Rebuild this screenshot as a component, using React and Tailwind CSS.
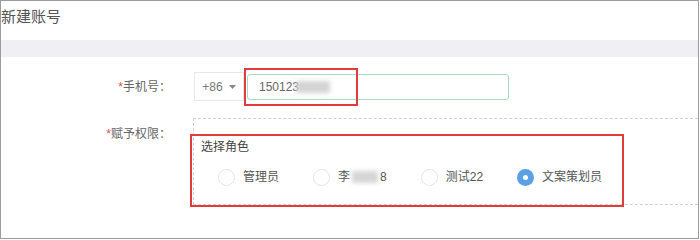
import React from 'react';

function Radio({ label, checked, blurred }) {
  return (
    <div className="flex items-center gap-[8px]">
      {checked ? (
        <span className="w-[17px] h-[17px] rounded-full bg-[#5b9fe4] flex items-center justify-center">
          <span className="w-[5px] h-[5px] rounded-full bg-white" />
        </span>
      ) : (
        <span className="w-[17px] h-[17px] rounded-full border border-[#e4e4e4] bg-white" />
      )}
      {blurred ? (
        <span className="flex items-center text-[12px] text-[#555]">
          李
          <span className="inline-block w-[26px] h-[12px] bg-[#d6d6d6] blur-[2px] mx-[2px]" />
          8
        </span>
      ) : (
        <span className="text-[12px] text-[#555]">{label}</span>
      )}
    </div>
  );
}

export default function App() {
  return (
    <div className="w-[699px] h-[239px] border border-[#9c9c9c] bg-white overflow-hidden font-['Liberation_Sans','Noto_Sans_CJK_SC',sans-serif]">
      {/* 标题 */}
      <div className="h-[39px] pt-[6px] text-[15px] leading-[20px] text-[#555]">新建账号</div>
      <div className="h-[17px] bg-[#f0f0f4]" />

      {/* 手机号 */}
      <div className="flex items-center mt-[15px] h-[29px]">
        <div className="w-[170px] text-right text-[12px] text-[#666]">
          <span className="text-[#e05050]">*</span>手机号：
        </div>
        <div className="relative flex items-center ml-[23px]">
          <div className="w-[50px] h-[29px] border border-[#e8e8e8] flex items-center justify-center gap-[6px] text-[12px] text-[#777]">
            +86
            <svg width="7" height="4" viewBox="0 0 7 4">
              <path d="M0 0 L7 0 L3.5 4 Z" fill="#888" />
            </svg>
          </div>
          <div className="ml-[3px] w-[262px] h-[26px] border border-[#a6dcc3] rounded-[3px] flex items-center pl-[11px] text-[12px] text-[#666]">
            150123
            <span className="inline-block w-[34px] h-[12px] bg-[#d4d4d4] blur-[2px] -ml-[3px]" />
          </div>
          <div className="absolute left-[50px] -top-[4px] w-[114px] h-[38px] border-2 border-[#e03c3c]" />
        </div>
      </div>

      {/* 赋予权限 */}
      <div className="flex items-start mt-[17px]">
        <div className="w-[170px] pt-[7px] text-right text-[12px] text-[#666]">
          <span className="text-[#e05050]">*</span>赋予权限：
        </div>
        <div className="relative flex-1 ml-[22px] h-[87px] border border-dashed border-[#cfcfcf] border-r-0 pl-[7px] pt-[20px]">
          <div className="text-[12px] leading-[16px] text-[#444]">选择角色</div>
          <div className="flex items-center gap-[34px] mt-[13px] pl-[17px]">
            <Radio label="管理员" />
            <Radio blurred />
            <Radio label="测试22" />
            <Radio label="文案策划员" checked />
          </div>
          <div className="absolute -left-[4px] top-[15px] w-[434px] h-[73px] border-2 border-[#e03c3c]" />
        </div>
      </div>
    </div>
  );
}
